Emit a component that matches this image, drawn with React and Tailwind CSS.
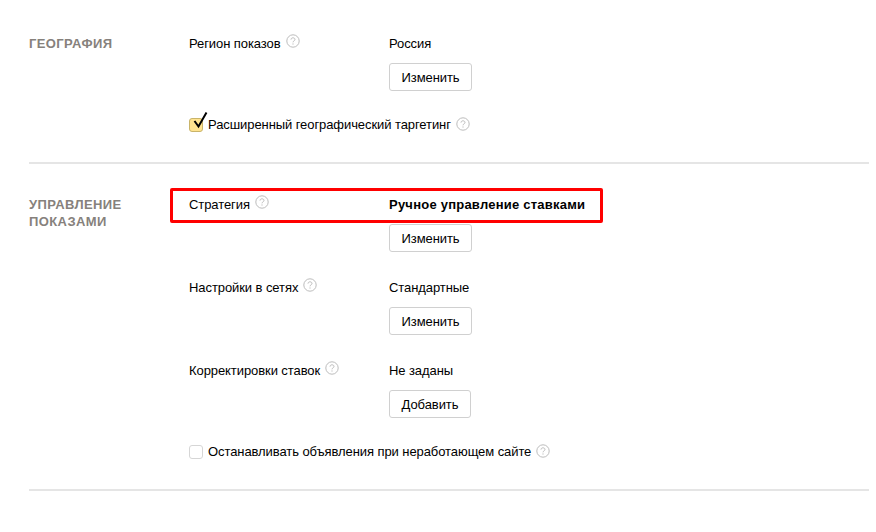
const Help = () => (
  <svg width="14" height="14" viewBox="0 0 14 14" className="shrink-0" fill="none">
    <circle cx="7" cy="7" r="6.2" stroke="#bcbcbc" strokeWidth="1" />
    <path d="M5 5.6c0-1.1.9-1.8 2-1.8s2 .7 2 1.6c0 1.4-2 1.5-2 2.9" stroke="#bcbcbc" strokeWidth="1" />
    <rect x="6.5" y="9.4" width="1" height="1.2" fill="#bcbcbc" />
  </svg>
);

const Btn = ({ children, className }) => (
  <button className={"block h-[28px] border border-[#d0d0d0] rounded-[3px] bg-white text-[13px] leading-none text-black " + className}>
    {children}
  </button>
);

const Row = ({ label, value, action, bold, className }) => (
  <div className={"flex " + className}>
    <div className="w-[200px] flex items-start gap-[5px] h-[16px] leading-[16px]">
      {label}
      <span className="-mt-[2px]"><Help /></span>
    </div>
    <div>
      <div className={"h-[16px] leading-[16px] " + (bold ? "font-bold tracking-[0.23px]" : "")}>{value}</div>
      <Btn className={action === "Добавить" ? "mt-[11px] w-[82px]" : "mt-[11px] w-[83px]"}>{action}</Btn>
    </div>
  </div>
);

const Heading = ({ children }) => (
  <div className="w-[160px] shrink-0 -mt-[1px] text-[13px] leading-[17px] font-bold tracking-[0.4px] text-[#86817c]">
    {children}
  </div>
);

export default function App() {
  return (
    <div className="relative w-[876px] h-[532px] bg-white overflow-hidden text-[13px] tracking-[-0.08px] text-black font-['Liberation_Sans',Arial,sans-serif]">
      <div className="ml-[29px] w-[840px] pt-[36px]">
        <div className="flex h-[126px] border-b-2 border-[#e5e5e5] box-content">
          <Heading>ГЕОГРАФИЯ</Heading>
          <div>
            <Row label="Регион показов" value="Россия" action="Изменить" />
            <div className="mt-[26px] flex items-center h-[16px] relative">
              <span className="w-[14px] h-[14px] rounded-[3px] border border-[#c9b46a] bg-[#ffe38f] shrink-0" />
              <svg width="18" height="18" viewBox="0 0 18 18" className="absolute left-[2px] -top-[6px]" fill="none">
                <path d="M3.5 10l4 5.5 8-14" stroke="#000" strokeWidth="2" />
              </svg>
              <span className="ml-[5px] leading-[16px]">Расширенный географический таргетинг</span>
              <span className="ml-[5px] -mt-[2px]"><Help /></span>
            </div>
          </div>
        </div>
        <div className="flex pt-[33px] h-[292px] border-b-2 border-[#e5e5e5] box-content">
          <Heading>УПРАВЛЕНИЕ ПОКАЗАМИ</Heading>
          <div>
            <Row label="Стратегия" value="Ручное управление ставками" action="Изменить" bold />
            <Row className="mt-[28px]" label="Настройки в сетях" value="Стандартные" action="Изменить" />
            <Row className="mt-[28px]" label="Корректировки ставок" value="Не заданы" action="Добавить" />
            <div className="mt-[26px] flex items-center h-[16px]">
              <span className="w-[14px] h-[14px] rounded-[3px] border border-[#d6d6d6] bg-white shrink-0" />
              <span className="ml-[5px] leading-[16px]">Останавливать объявления при неработающем сайте</span>
              <span className="ml-[5px] -mt-[2px]"><Help /></span>
            </div>
          </div>
        </div>
      </div>
      <div className="absolute left-[170px] top-[188px] w-[433px] h-[35px] border-[3px] border-[#ff0000] rounded-[2px]" />
    </div>
  );
}
